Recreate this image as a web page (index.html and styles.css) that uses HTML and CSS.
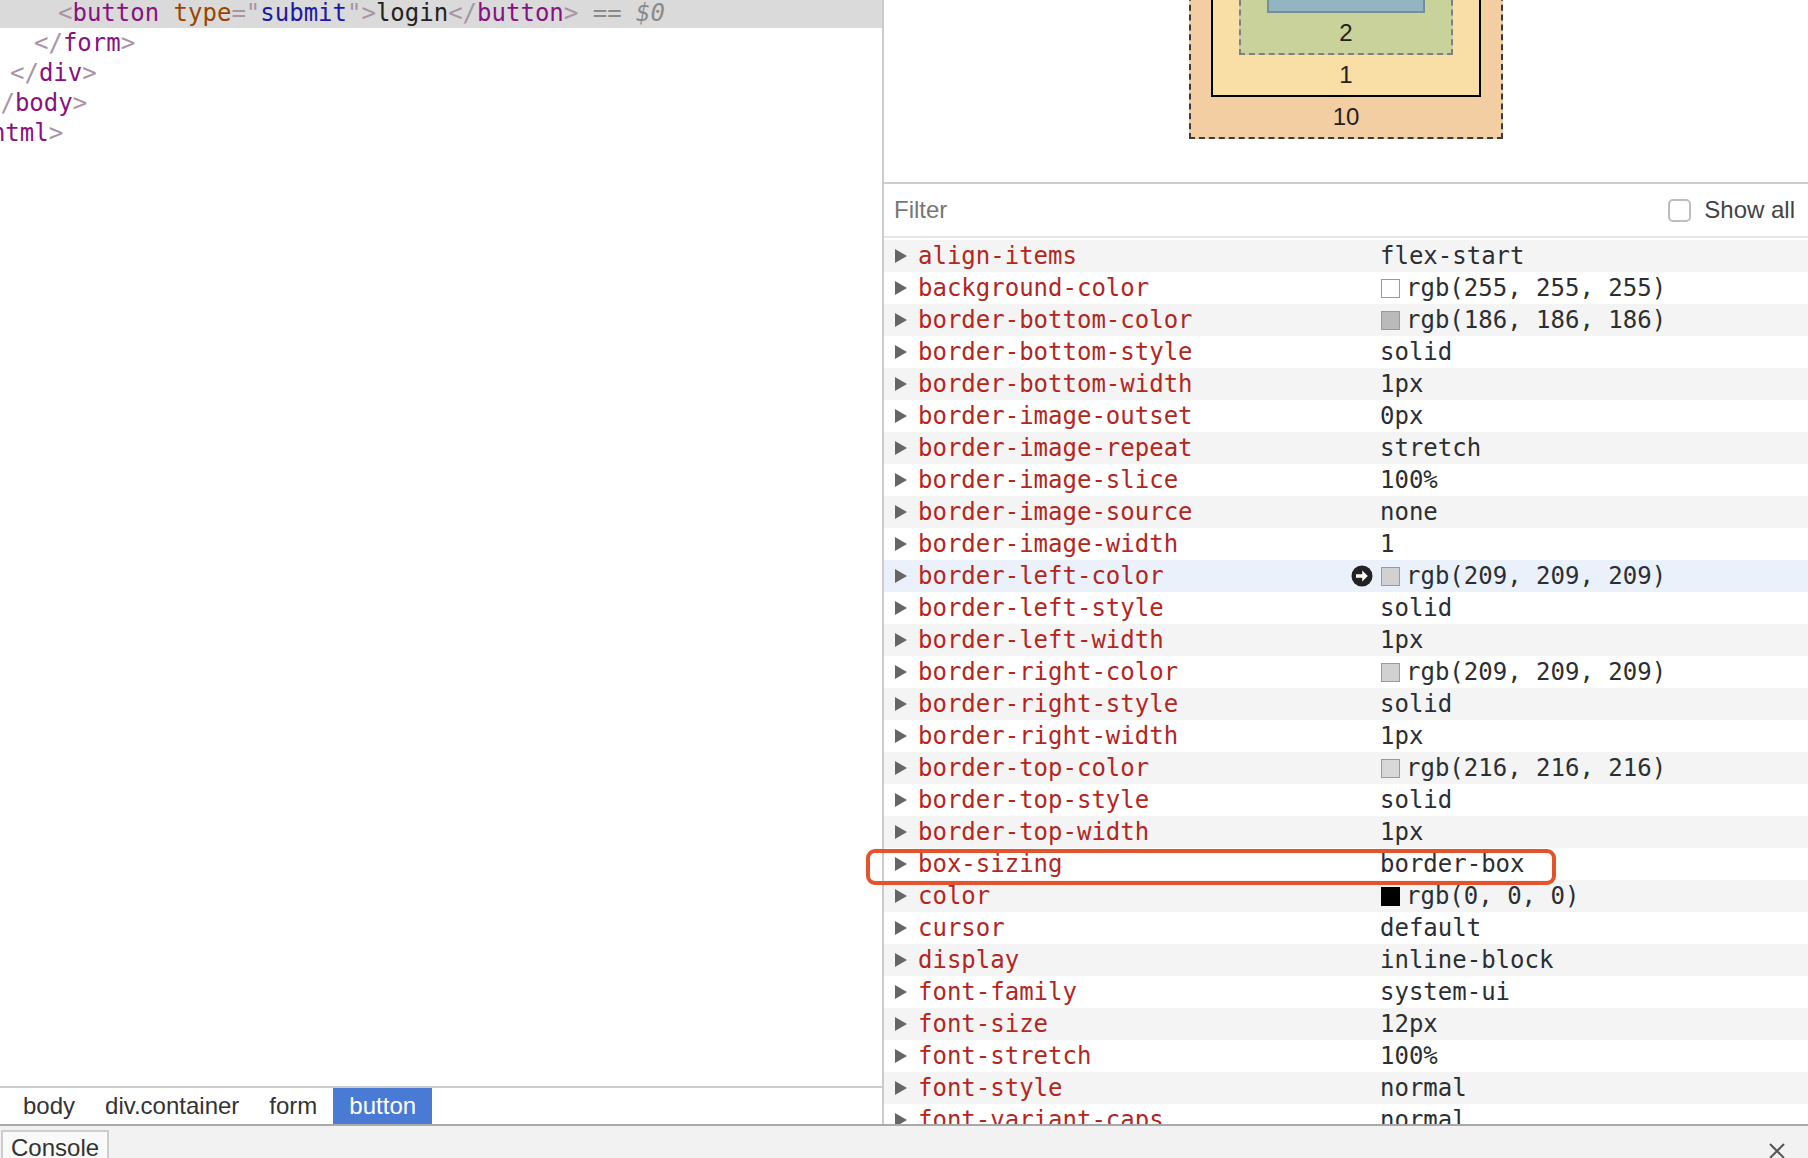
FILE: index.html
```html
<!DOCTYPE html>
<html>
<head>
<meta charset="utf-8">
<link rel="stylesheet" href="styles.css">
</head>
<body>
<div class="app">
  <div class="main">
    <section class="elements">
      <div class="tree">
        <div class="line sel lv4"><span class="br">&lt;</span><span class="tg">button</span> <span class="an">type</span><span class="br">="</span><span class="av">submit</span><span class="br">"&gt;</span><span class="tx">login</span><span class="br">&lt;/</span><span class="tg">button</span><span class="br">&gt;</span> <span class="eq">==</span> <span class="dl">$0</span></div>
        <div class="line lv3"><span class="br">&lt;/</span><span class="tg">form</span><span class="br">&gt;</span></div>
        <div class="line lv2"><span class="br">&lt;/</span><span class="tg">div</span><span class="br">&gt;</span></div>
        <div class="line lv1"><span class="br">&lt;/</span><span class="tg">body</span><span class="br">&gt;</span></div>
        <div class="line lv0"><span class="br">&lt;/</span><span class="tg">html</span><span class="br">&gt;</span></div>
      </div>
      <nav class="crumbs">
        <span class="crumb">body</span>
        <span class="crumb">div.container</span>
        <span class="crumb">form</span>
        <span class="crumb on">button</span>
      </nav>
    </section>
    <section class="side">
      <div class="boxmodel">
        <div class="bm-margin">
          <div class="bm-border">
            <div class="bm-padding">
              <div class="bm-content"></div>
              <div class="bm-label">2</div>
            </div>
            <div class="bm-label">1</div>
          </div>
          <div class="bm-label">10</div>
        </div>
      </div>
      <div class="filter">
        <span class="filter-input">Filter</span>
        <span class="chk"></span>
        <span class="showall">Show all</span>
      </div>
      <div class="props">
        <div class="row"><span class="tri"></span><span class="name">align-items</span><span class="slot"></span><span class="val">flex-start</span></div>
        <div class="row"><span class="tri"></span><span class="name">background-color</span><span class="slot"></span><span class="val"><span class="sw sw-white"></span>rgb(255, 255, 255)</span></div>
        <div class="row"><span class="tri"></span><span class="name">border-bottom-color</span><span class="slot"></span><span class="val"><span class="sw sw-186"></span>rgb(186, 186, 186)</span></div>
        <div class="row"><span class="tri"></span><span class="name">border-bottom-style</span><span class="slot"></span><span class="val">solid</span></div>
        <div class="row"><span class="tri"></span><span class="name">border-bottom-width</span><span class="slot"></span><span class="val">1px</span></div>
        <div class="row"><span class="tri"></span><span class="name">border-image-outset</span><span class="slot"></span><span class="val">0px</span></div>
        <div class="row"><span class="tri"></span><span class="name">border-image-repeat</span><span class="slot"></span><span class="val">stretch</span></div>
        <div class="row"><span class="tri"></span><span class="name">border-image-slice</span><span class="slot"></span><span class="val">100%</span></div>
        <div class="row"><span class="tri"></span><span class="name">border-image-source</span><span class="slot"></span><span class="val">none</span></div>
        <div class="row"><span class="tri"></span><span class="name">border-image-width</span><span class="slot"></span><span class="val">1</span></div>
        <div class="row hl"><span class="tri"></span><span class="name">border-left-color</span><span class="slot"><svg class="goto" width="22" height="22" viewBox="0 0 22 22"><circle cx="11" cy="11" r="10.5" fill="#222"/><path d="M5 9.3h6.2V5.6L16.8 11l-5.6 5.4v-3.7H5z" fill="#fff"/></svg></span><span class="val"><span class="sw sw-209"></span>rgb(209, 209, 209)</span></div>
        <div class="row"><span class="tri"></span><span class="name">border-left-style</span><span class="slot"></span><span class="val">solid</span></div>
        <div class="row"><span class="tri"></span><span class="name">border-left-width</span><span class="slot"></span><span class="val">1px</span></div>
        <div class="row"><span class="tri"></span><span class="name">border-right-color</span><span class="slot"></span><span class="val"><span class="sw sw-209"></span>rgb(209, 209, 209)</span></div>
        <div class="row"><span class="tri"></span><span class="name">border-right-style</span><span class="slot"></span><span class="val">solid</span></div>
        <div class="row"><span class="tri"></span><span class="name">border-right-width</span><span class="slot"></span><span class="val">1px</span></div>
        <div class="row"><span class="tri"></span><span class="name">border-top-color</span><span class="slot"></span><span class="val"><span class="sw sw-216"></span>rgb(216, 216, 216)</span></div>
        <div class="row"><span class="tri"></span><span class="name">border-top-style</span><span class="slot"></span><span class="val">solid</span></div>
        <div class="row"><span class="tri"></span><span class="name">border-top-width</span><span class="slot"></span><span class="val">1px</span></div>
        <div class="row"><span class="tri"></span><span class="name">box-sizing</span><span class="slot"></span><span class="val">border-box</span></div>
        <div class="row"><span class="tri"></span><span class="name">color</span><span class="slot"></span><span class="val"><span class="sw sw-black"></span>rgb(0, 0, 0)</span></div>
        <div class="row"><span class="tri"></span><span class="name">cursor</span><span class="slot"></span><span class="val">default</span></div>
        <div class="row"><span class="tri"></span><span class="name">display</span><span class="slot"></span><span class="val">inline-block</span></div>
        <div class="row"><span class="tri"></span><span class="name">font-family</span><span class="slot"></span><span class="val">system-ui</span></div>
        <div class="row"><span class="tri"></span><span class="name">font-size</span><span class="slot"></span><span class="val">12px</span></div>
        <div class="row"><span class="tri"></span><span class="name">font-stretch</span><span class="slot"></span><span class="val">100%</span></div>
        <div class="row"><span class="tri"></span><span class="name">font-style</span><span class="slot"></span><span class="val">normal</span></div>
        <div class="row"><span class="tri"></span><span class="name">font-variant-caps</span><span class="slot"></span><span class="val">normal</span></div>
      </div>
    </section>
  </div>
  <div class="drawer">
    <span class="tab">Console</span>
    <svg class="close" width="18" height="18" viewBox="0 0 18 18"><path d="M2 2l14 14M16 2L2 16" stroke="#555" stroke-width="2" fill="none"/></svg>
  </div>
  <div class="callout"></div>
</div>
</body>
</html>
```

FILE: styles.css
```css
html, body {
  margin: 0;
  padding: 0;
}
body {
  width: 1808px;
  height: 1158px;
  overflow: hidden;
  background: #fff;
  font-family: "Liberation Sans", Arial, sans-serif;
}
.app {
  position: relative;
  height: 1158px;
  display: flex;
  flex-direction: column;
}
.main {
  display: flex;
  height: 1124px;
  flex: none;
}

/* ---------- Elements tree ---------- */
.elements {
  width: 882px;
  flex: none;
  display: flex;
  flex-direction: column;
  overflow: hidden;
}
.tree {
  flex: 1;
  margin: -2px 0 0 -38px;
  font: 24px/30px "DejaVu Sans Mono", monospace;
  color: #222;
}
.line {
  height: 30px;
  white-space: pre;
}
.sel { background: #dadada; }
.lv0 { padding-left: 0; }
.lv1 { padding-left: 24px; }
.lv2 { padding-left: 48px; }
.lv3 { padding-left: 72px; }
.lv4 { padding-left: 96px; }
.br { color: #a894a6; }
.tg { color: #881280; }
.an { color: #994500; }
.av { color: #1a1aa6; }
.tx { color: #222; }
.eq { color: #8a8a8a; }
.dl { color: #8a8a8a; font-style: italic; }

.crumbs {
  height: 38px;
  box-sizing: border-box;
  flex: none;
  border-top: 2px solid #cccccc;
  display: flex;
  padding-left: 8px;
  font-size: 24px;
  color: #333;
}
.crumb {
  padding: 0 15px;
  line-height: 36px;
}
.crumb.on {
  background: #4a7bd4;
  color: #fff;
  padding: 0 16px;
  margin-left: 1px;
}

/* ---------- Side pane ---------- */
.side {
  flex: 1;
  min-width: 0;
  border-left: 2px solid #cbcbcb;
  display: flex;
  flex-direction: column;
  overflow: hidden;
}
.boxmodel {
  height: 184px;
  box-sizing: border-box;
  flex: none;
  display: flex;
  justify-content: center;
  align-items: flex-end;
  padding-bottom: 43px;
  border-bottom: 2px solid #cfcfcf;
  overflow: hidden;
}
.bm-margin {
  background: #f3cea3;
  border: 2px dashed #3a3a3a;
  padding: 40px 20px 0;
  display: flex;
  flex-direction: column;
  align-items: center;
}
.bm-border {
  width: 270px;
  box-sizing: border-box;
  background: #f9dfa5;
  border: 2px solid #000;
  padding: 40px 26px 0;
  display: flex;
  flex-direction: column;
  align-items: center;
}
.bm-padding {
  width: 214px;
  box-sizing: border-box;
  background: #c8d29a;
  border: 2px dashed #808080;
  padding: 40px 26px 0;
  display: flex;
  flex-direction: column;
  align-items: center;
}
.bm-content {
  width: 158px;
  height: 60px;
  box-sizing: border-box;
  background: #92b5c1;
  border: 2px solid #748e9a;
}
.bm-label {
  height: 40px;
  line-height: 40px;
  text-align: center;
  font-size: 24px;
  color: #222;
}

.filter {
  height: 54px;
  box-sizing: border-box;
  flex: none;
  border-bottom: 2px solid #e6e6e6;
  margin-bottom: 2px;
  display: flex;
  align-items: center;
  padding: 0 13px 0 10px;
}
.filter-input {
  flex: 1;
  font-size: 24px;
  color: #777;
}
.chk {
  width: 23px;
  height: 23px;
  box-sizing: border-box;
  border: 2px solid #bdbdbd;
  border-radius: 5px;
  background: #fff;
  margin-right: 13px;
}
.showall {
  font-size: 24px;
  color: #444;
}

.props {
  flex: 1;
  overflow: hidden;
  font: 24px/32px "DejaVu Sans Mono", monospace;
}
.row {
  display: grid;
  grid-template-columns: 23px 430px 32px 1fr;
  align-items: center;
  height: 32px;
  padding-left: 11px;
}
.row:nth-child(odd) { background: #f4f4f4; }
.row.hl { background: #eaf1fb; }
.tri {
  width: 0;
  height: 0;
  border-left: 12px solid #666;
  border-top: 7px solid transparent;
  border-bottom: 7px solid transparent;
}
.name {
  color: #b3261e;
  white-space: pre;
}
.slot {
  display: flex;
  align-items: center;
  height: 32px;
}
.goto {
  margin-left: 3px;
  display: block;
}
.val {
  display: flex;
  align-items: center;
  white-space: pre;
  color: #2b2f33;
}
.sw {
  width: 19px;
  height: 19px;
  box-sizing: border-box;
  border: 1px solid #9a9a9a;
  margin-left: 1px;
  margin-right: 6px;
  flex: none;
}
.sw-white { background: #fff; }
.sw-186 { background: #bababa; }
.sw-209 { background: #d1d1d1; }
.sw-216 { background: #d8d8d8; }
.sw-black { background: #000; border-color: #000; }

/* ---------- Drawer ---------- */
.drawer {
  height: 34px;
  box-sizing: border-box;
  flex: none;
  border-top: 2px solid #a9a9a9;
  background: #f2f2f2;
  display: flex;
  justify-content: space-between;
  align-items: flex-start;
  padding: 4px 22px 0 1px;
  overflow: hidden;
}
.tab {
  height: 40px;
  border: 2px solid #cdcdcd;
  border-bottom: none;
  background: #f9f9f9;
  padding: 2px 8px 0;
  font-size: 24px;
  color: #333;
}
.close {
  margin-top: 12px;
  display: block;
}

/* ---------- Annotation ---------- */
.callout {
  position: absolute;
  left: 866px;
  top: 849px;
  width: 690px;
  height: 36px;
  box-sizing: border-box;
  border: 4px solid #e5532d;
  border-radius: 9px;
}
```
